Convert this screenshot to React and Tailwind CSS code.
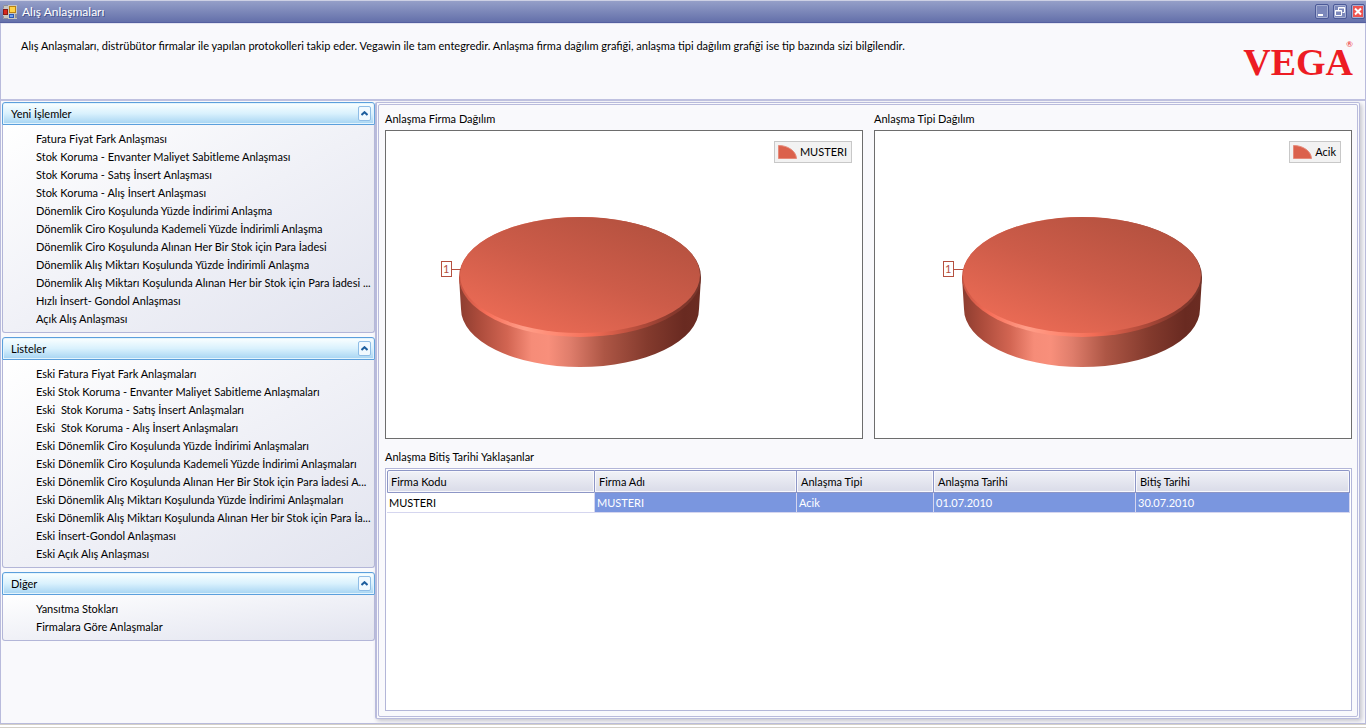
import React, { useState } from "react";

const GROUPS = [
  {
    title: "Yeni İşlemler",
    items: [
      "Fatura Fiyat Fark Anlaşması",
      "Stok Koruma - Envanter Maliyet Sabitleme Anlaşması",
      "Stok Koruma - Satış İnsert Anlaşması",
      "Stok Koruma - Alış İnsert Anlaşması",
      "Dönemlik Ciro Koşulunda Yüzde İndirimi Anlaşma",
      "Dönemlik Ciro Koşulunda Kademeli Yüzde İndirimli Anlaşma",
      "Dönemlik Ciro Koşulunda Alınan Her Bir Stok için Para İadesi",
      "Dönemlik Alış Miktarı Koşulunda Yüzde İndirimli Anlaşma",
      "Dönemlik Alış Miktarı Koşulunda Alınan Her bir Stok için Para İadesi ...",
      "Hızlı İnsert- Gondol Anlaşması",
      "Açık Alış Anlaşması",
    ],
  },
  {
    title: "Listeler",
    items: [
      "Eski Fatura Fiyat Fark Anlaşmaları",
      "Eski Stok Koruma - Envanter Maliyet Sabitleme Anlaşmaları",
      "Eski  Stok Koruma - Satış İnsert Anlaşmaları",
      "Eski  Stok Koruma - Alış İnsert Anlaşmaları",
      "Eski Dönemlik Ciro Koşulunda Yüzde İndirimi Anlaşmaları",
      "Eski Dönemlik Ciro Koşulunda Kademeli Yüzde İndirimi Anlaşmaları",
      "Eski Dönemlik Ciro Koşulunda Alınan Her Bir Stok için Para İadesi A...",
      "Eski Dönemlik Alış Miktarı Koşulunda Yüzde İndirimi Anlaşmaları",
      "Eski Dönemlik Alış Miktarı Koşulunda Alınan Her bir Stok için Para İa...",
      "Eski İnsert-Gondol Anlaşması",
      "Eski Açık Alış Anlaşması",
    ],
  },
  {
    title: "Diğer",
    items: ["Yansıtma Stokları", "Firmalara Göre Anlaşmalar"],
  },
];

const COLUMNS = [
  { label: "Firma Kodu", width: 208 },
  { label: "Firma Adı", width: 202 },
  { label: "Anlaşma Tipi", width: 137 },
  { label: "Anlaşma Tarihi", width: 202 },
  { label: "Bitiş Tarihi", width: 214 },
];
const TOTAL = COLUMNS.reduce((sum, c) => sum + c.width, 0);

const ROWS = [["MUSTERI", "MUSTERI", "Acik", "01.07.2010", "30.07.2010"]];

function AppIcon() {
  return (
    <svg width="14" height="14" viewBox="0 0 14 14" aria-hidden="true">
      <rect width="14" height="14" fill="#c9c6c0" />
      <path d="M0.500 3.500V0.500H5M0.500 11V13.500H5" fill="none" stroke="#8d8f9c" />
      <rect x="0.5" y="4.5" width="4" height="5" fill="#d8281c" stroke="#8a1a14" />
      <rect x="6.5" y="1.5" width="6" height="6" fill="#ffd34a" stroke="#b98212" />
      <rect x="6.5" y="9.5" width="4" height="3" fill="#6fa0f0" stroke="#2c57b5" />
      <rect x="12" y="9" width="2" height="4" fill="#8d8f9c" />
    </svg>
  );
}

function TitleBar() {
  const button =
    "flex h-[15px] w-[14px] items-center justify-center rounded-xs border border-[#4c5a98] shadow-[inset_0_0_0_1px_#a5aed2]";
  return (
    <header className="flex h-[23px] items-center justify-between border-t border-b border-t-[#cdd0e4] border-b-[#5560a0] bg-linear-to-b from-[#959fc8] to-[#6470aa] pl-[3px] pr-px">
      <div className="flex items-center gap-[5px]">
        <AppIcon />
        <h1 className="text-[12px] leading-4 text-white [text-shadow:1px_1px_0_#4a5590]">Alış Anlaşmaları</h1>
      </div>
      <div className="flex gap-1">
        <button type="button" aria-label="Simge durumuna küçült" className={`${button} bg-[#7c88bb]`}>
          <svg width="12" height="13" viewBox="0 0 12 13">
            <rect x="2" y="9" width="5" height="2" fill="#fff" />
          </svg>
        </button>
        <button type="button" aria-label="Önceki boyut" className={`${button} bg-[#7c88bb]`}>
          <svg width="12" height="13" viewBox="0 0 12 13" fill="none" stroke="#fff">
            <path d="M4.5 5V2.5H10.5V7.5H8.5M4 3H11" />
            <path d="M1.5 5.5H7.5V10.5H1.5ZM1 6H8" />
          </svg>
        </button>
        <button type="button" aria-label="Kapat" className={`${button} bg-[#ee5350]`}>
          <svg width="12" height="13" viewBox="0 0 12 13">
            <path d="M3 3.5L9 9.5M9 3.5L3 9.5" stroke="#fff" strokeWidth="2" />
          </svg>
        </button>
      </div>
    </header>
  );
}

function NavGroup({ title, items }) {
  const [open, setOpen] = useState(true);

  return (
    <section className="rounded-[3px]">
      <div className="flex h-[23px] items-center justify-between rounded-t-[3px] border border-[#5b9fdc] bg-linear-to-b from-[#fbffff] via-[#d9f1fd] to-[#a6d4f2] pl-2 pr-[3px] shadow-[inset_0_0_0_1px_#e3f4fd]">
        <h2>{title}</h2>
        <button
          type="button"
          aria-expanded={open}
          aria-label={title}
          onClick={() => setOpen(!open)}
          className="flex h-[15px] w-[13px] items-center justify-center rounded-xs border border-[#8fbde6] bg-[#f0f9ff]"
        >
          <svg width="7" height="5" viewBox="0 0 7 5" className={open ? "" : "rotate-180"}>
            <path d="M0.500 4L3.500 1.200L6.500 4" fill="none" stroke="#1e5f9f" strokeWidth="2" />
          </svg>
        </button>
      </div>
      {open && (
        <ul className="rounded-b-[3px] border border-t-0 border-[#b3b6d8] bg-linear-to-br from-white via-[#f0f1f7] to-[#e2e4ef] pt-[5px] pb-1 pl-[33px]">
          {items.map((item) => (
            <li key={item} className="h-[18px] leading-[18px]">
              <a href="#" className="whitespace-pre hover:underline">
                {item}
              </a>
            </li>
          ))}
        </ul>
      )}
    </section>
  );
}

function Pie({ id, rx, value }) {
  const left = 140 - rx;
  const right = 140 + rx;
  return (
    <svg width="280" height="170" viewBox="0 0 280 170" role="img" aria-label={`Pasta grafik: ${value}`}>
      <defs>
        <linearGradient id={`${id}-side`}>
          <stop offset="0" stopColor="#8c3d30" />
          <stop offset="0.08" stopColor="#ab4b3b" />
          <stop offset="0.2" stopColor="#d26552" />
          <stop offset="0.3" stopColor="#f68c78" />
          <stop offset="0.37" stopColor="#f88f7b" />
          <stop offset="0.46" stopColor="#df7d6b" />
          <stop offset="0.6" stopColor="#ad5645" />
          <stop offset="0.78" stopColor="#833a2d" />
          <stop offset="0.93" stopColor="#692a21" />
          <stop offset="1" stopColor="#6b2c22" />
        </linearGradient>
        <linearGradient id={`${id}-rim`}>
          <stop offset="0" stopColor="#c65341" />
          <stop offset="0.12" stopColor="#f8705a" />
          <stop offset="0.27" stopColor="#ff9e89" />
          <stop offset="0.4" stopColor="#ff8a73" />
          <stop offset="0.55" stopColor="#f26c55" />
          <stop offset="0.7" stopColor="#c05240" />
          <stop offset="0.88" stopColor="#88392d" />
          <stop offset="1" stopColor="#74352b" />
        </linearGradient>
        <linearGradient id={`${id}-top`} x1="0.2" y1="0.9" x2="0.8" y2="0.1">
          <stop offset="0" stopColor="#e96a54" />
          <stop offset="0.5" stopColor="#cd5c49" />
          <stop offset="1" stopColor="#b65240" />
        </linearGradient>
      </defs>
      <path
        d={`M${left} 77L${left + 2} 109A${rx - 2} 58 0 0 0 ${right - 2} 109L${right} 77Z`}
        fill={`url(#${id}-side)`}
      />
      <ellipse cx="140" cy="77" rx={rx} ry="60" fill={`url(#${id}-rim)`} />
      <ellipse cx="140" cy="75" rx={rx - 1} ry="58" fill={`url(#${id}-top)`} />
      <path d="M11 69.500H21" stroke="#b5503f" />
      <rect x="1.500" y="61.500" width="10" height="15" fill="#fff" stroke="#b5503f" />
      <text x="3" y="73" fontSize="11" fill="#b5503f">
        {value}
      </text>
    </svg>
  );
}

function ChartPanel({ id, title, legend, rx }) {
  return (
    <section className="flex flex-1 flex-col">
      <h2 className="mb-[3px] h-4 leading-4">{title}</h2>
      <div className="flex h-[309px] border border-[#6d6d6d] bg-white">
        <div className="flex flex-1 items-center justify-center">
          <Pie id={id} rx={rx} value="1" />
        </div>
        <div className="mt-2.5 mr-2.5 flex h-[22px] items-center gap-[3px] self-start border border-[#c8c8c8] bg-[#f2f2f2] pr-1 pl-[3px] text-black">
          <svg width="19" height="14" viewBox="0 0 19 14" aria-hidden="true">
            <path d="M0.500 0.500C10 0.500 18 6 18.500 13.500H0.500Z" fill="#db614c" stroke="#e58a7a" />
          </svg>
          <span>{legend}</span>
        </div>
      </div>
    </section>
  );
}

function DeadlineTable() {
  return (
    <section className="flex flex-1 flex-col">
      <h2 className="mb-[3px] h-4 leading-4">Anlaşma Bitiş Tarihi Yaklaşanlar</h2>
      <div className="flex-1 border border-[#b3b6d8] bg-white p-px">
        <table className="w-full table-fixed border-separate border-spacing-0 text-left">
          <colgroup>
            {COLUMNS.map((c) => (
              <col key={c.label} style={{ width: `${(c.width / TOTAL) * 100}%` }} />
            ))}
          </colgroup>
          <thead>
            <tr>
              {COLUMNS.map((c) => (
                <th
                  key={c.label}
                  scope="col"
                  className="h-[23px] border-y border-r border-[#8d96c6] bg-linear-to-b from-[#f1f2f7] to-[#d9dbe8] pl-1 font-normal shadow-[inset_0_0_0_1px_#f8f8fc] first:rounded-tl-xs first:border-l first:pl-[3px] last:rounded-tr-xs"
                >
                  {c.label}
                </th>
              ))}
            </tr>
          </thead>
          <tbody>
            {ROWS.map((row, i) => (
              <tr key={i} className="bg-[#7a96df] text-white">
                {row.map((cell, j) => (
                  <td
                    key={j}
                    className="h-5 border-r border-b border-[#d5d6ef] pl-0.5 first:bg-white first:text-black"
                  >
                    {cell}
                  </td>
                ))}
              </tr>
            ))}
          </tbody>
        </table>
      </div>
    </section>
  );
}

function App() {
  return (
    <div className="flex min-h-screen flex-col bg-[#f9f9fc] font-[Lato,'DejaVu_Sans_Condensed',sans-serif] text-[11px] leading-4 text-black">
      <TitleBar />

      <div className="flex flex-1 flex-col border-x border-b border-[#b9bbdc]">
        <div className="flex h-[78px] justify-between border-t border-b-2 border-t-[#e3e4f2] border-b-[#bfc1e0] pr-3 pl-5">
          <p className="mt-3.5">
            Alış Anlaşmaları, distrübütor firmalar ile yapılan protokolleri takip eder. Vegawin ile tam entegredir.
            Anlaşma firma dağılım grafiği, anlaşma tipi dağılım grafiği ise tip bazında sizi bilgilendir.
          </p>
          <div className="relative flex items-center text-[#ed1c24]">
            <span className="font-['Liberation_Serif',serif] text-[38px] leading-[42px] font-bold">VEGA</span>
            <span className="absolute top-3 right-0 text-[8px]">®</span>
          </div>
        </div>

        <div className="flex flex-1 pt-px">
          <nav className="flex w-[374px] shrink-0 flex-col gap-1 pl-px">
            {GROUPS.map((group) => (
              <NavGroup key={group.title} title={group.title} items={group.items} />
            ))}
          </nav>

          <main className="mr-[5px] mb-1 flex flex-1 rounded-xs border border-l-2 border-[#b9bbdc] p-px shadow-[2px_2px_4px_#c4c4cc]">
            <div className="flex flex-1 flex-col gap-2.5 rounded-xs border border-[#b9bbdc] px-1.5 pt-1.5 pr-[5px] pb-[5px]">
              <div className="flex gap-[11px]">
                <ChartPanel id="firma" title="Anlaşma Firma Dağılım" legend="MUSTERI" rx={121} />
                <ChartPanel id="tip" title="Anlaşma Tipi Dağılım" legend="Acik" rx={120} />
              </div>
              <DeadlineTable />
            </div>
          </main>
        </div>
      </div>

      <div className="h-1 border-y border-[#d4d0c8] bg-white" />
    </div>
  );
}

export default App;
